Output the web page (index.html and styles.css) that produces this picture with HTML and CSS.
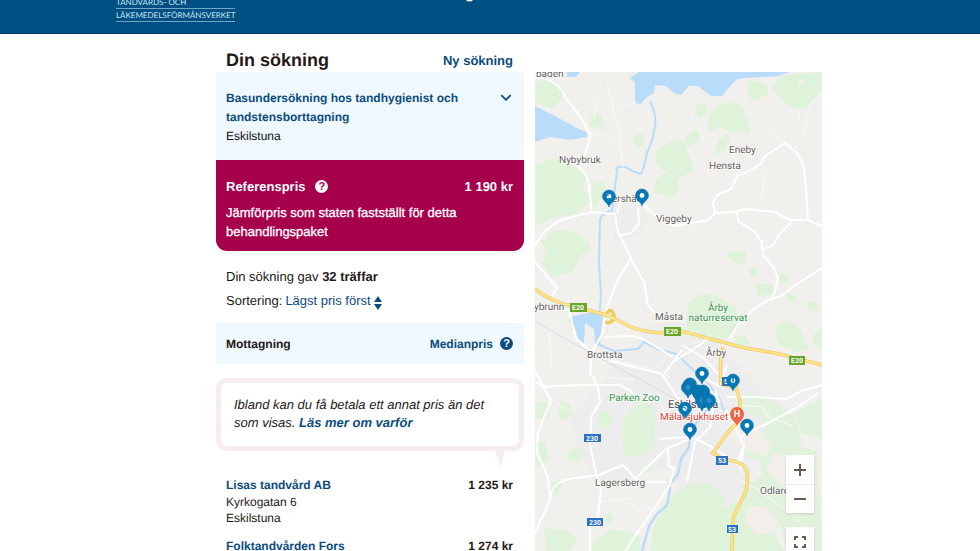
FILE: index.html
```
<!DOCTYPE html>
<html lang="sv">
<head>
<meta charset="utf-8">
<meta name="viewport" content="width=device-width, initial-scale=1">
<title>Din sökning</title>
<link rel="stylesheet" href="styles.css">
</head>
<body>
<header class="top">
  <div class="wrap top-inner">
    <div class="logo"><span>TANDVÅRDS- OCH</span><span>LÄKEMEDELSFÖRMÅNSVERKET</span></div>
    <svg class="top-mark" viewBox="0 0 8 2" aria-hidden="true"><path d="M0 0h7q-1 1.500-3.500 1.500T0 0z" fill="#fff"/></svg>
  </div>
</header>
<main class="wrap content">
  <section class="results">
    <div class="title-row"><h1>Din sökning</h1><a href="#">Ny sökning</a></div>
    <div class="panel query">
      <div><a href="#">Basundersökning hos tandhygienist och tandstensborttagning</a><p>Eskilstuna</p></div>
      <button class="plain" type="button" aria-label="Visa mer"><svg class="chevron" viewBox="0 0 10 6"><path d="M1 1l4 4 4-4" fill="none" stroke="currentColor" stroke-width="1.500"/></svg></button>
    </div>
    <div class="reference">
      <div class="row"><span class="label"><strong>Referenspris</strong>
        <button class="plain help" type="button" aria-label="Om referenspris">?</button></span><strong>1 190 kr</strong></div>
      <p>Jämförpris som staten fastställt för detta behandlingspaket</p>
    </div>
    <div class="summary">
      <p>Din sökning gav <strong>32 träffar</strong></p>
      <div class="sort"><label for="sort">Sortering:</label>
        <select id="sort"><option>Lägst pris först</option></select>
        <svg class="sorter" viewBox="0 0 8 14" aria-hidden="true"><path d="M4 0l4 6H0zM4 14l4-6H0z" fill="currentColor"/></svg>
      </div>
    </div>
    <div class="panel row columns"><strong>Mottagning</strong>
      <span class="label"><a href="#">Medianpris</a><button class="plain help" type="button" aria-label="Om medianpris">?</button></span></div>
    <div class="bubble">
      <p>Ibland kan du få betala ett annat pris än det som visas. <a href="#">Läs mer om varför</a></p>
      <svg class="tail" viewBox="0 0 12 18" aria-hidden="true"><path d="M0 0h12Q9 6 7 18Q4 6 0 0z" fill="#f5edf1"/></svg>
    </div>
    <ul class="clinics">
      <li><div><a href="#">Lisas tandvård AB</a><p>Kyrkogatan 6<br>Eskilstuna</p></div><strong>1 235 kr</strong></li>
      <li><div><a href="#">Folktandvården Fors</a></div><strong>1 274 kr</strong></li>
    </ul>
  </section>
  <section class="map" aria-label="Karta">
    <svg class="map-art" viewBox="535 72 287 479" preserveAspectRatio="xMidYMin slice">
      <defs>
        <g id="pin"><path d="M0 0C-1-4-6.500-6-6.500-10.500A6.500 6.500 0 0 1 6.500-10.500C6.500-6 1-4 0 0z" fill="#0679b5" stroke="#0568a0" stroke-width=".5"/><circle cy="-10.500" r="2.400" fill="#fff"/></g>
        <g id="pin-dim"><path d="M0 0C-1-4-6.500-6-6.500-10.500A6.500 6.500 0 0 1 6.500-10.500C6.500-6 1-4 0 0z" fill="#0679b5" stroke="#0568a0" stroke-width=".7"/><circle cy="-10.500" r="2.400" fill="#2d8fc2"/></g>
      </defs>
      <rect x="535" y="72" width="287" height="479" fill="#f2f0ec"/>
      <path fill="#ececee" d="M612 205l22-6 14 18-6 18-28 6zM648 325l52-4 22 30 30 25 30 50-38 60-32 60-30-40-10-40-70 20-22-30-10-40 20-20z" opacity=".75"/>
      <g class="green">
        <path d="M535 83q13-7 25 3 5 8 1 14l-10 8-16-6zM590 117l9-4q5 5 4 13l-6 2-8-3zM634 137q5-6 10-2l-1 11-5 2-5-6zM632 73h7v10l-5 2-4-7zM535 165l18-7 24 10 11 7-6 13 10 11-16 15-25 4-16 8zM594 181l10 1 3 10-9 9-5 16-3-18zM548 233q16-7 34 3 10 8 9 15l-9 3-10 18-21 5-8-12zM655 154q8-14 28-14l8 22-6 15-15-3-14-10zM655 180l10-7 12 5 1 12-6 9-17-7zM540 240l45 2 3 8-8 5-15 3-13-3-6-7z"/>
        <path d="M674 141q9 2 10 12l8 9 1 10-12 2-8 23zM696 106q6-5 11 0v8l-7 4-5-6zM685 139l3-5q10-8 12-1-1 11-14 14zM709 117q5-15 22-15 11 0 13 10l5 11 1 8-2 3-19-3-10-4-9 5-2-11zM715 148q3-10 13-14l2 5-8 15-8 1zM749 82q9-4 19 5l-1 9-16 4-3-7zM772 88q4-10 12-13l38-3v18l-15 18q-12 3-24-7z"/>
        <path d="M726 255q8-6 20-3v9l-6 4-9-4zM748 268h9v8l-6 1zM755 284h17l1 10-15 2zM779 273l9 2 1 9-9-2zM785 293l8 2 4 7-9-1zM808 300l8 3 3 7-7 1-5-5zM688 304q7-12 24-10l17 9q11 7 9 15-1 10-7 17l-14 10-15-8-16-8zM736 337l9-1 5 7-13 5-2-5zM777 324l10-4 14 9 8 20-13 3-16-6-5-12zM813 336l9-11v25l-9-6z"/>
        <path d="M621 429l4-12 15-16 13 4 2 40-12 12-20-1zM598 412l11-1 6 9-7 7-9-2zM560 401l10 2 3 13-11 4-3-5zM537 402h11l2 14-9 4-6-3zM535 442h10l3 19-10 5-3-3zM567 454l8-7 9 3-4 10-10 2zM645 465l7 4-4 4-5-3zM550 485l8-5 5 3-6 11-6 2zM602 515l9-3 3 8-6 5zM544 528l21 2 12 9-6 12h-25zM590 551l6-12 16-10 27 6 2 16zM650 551l4-25 18-30 16-11 21-2 16 13-5 12 15-5 25 4 22 11-8 15 10 18z"/>
        <path d="M739 394l27 1 19 14 11 10 6 28 15 4 5 100h-35l-8-30-30-8-8-15 2-12 20-10-4-15-18-8-4-20 20 3 12-12-16-10-14-8zM795 413l17-10 10-4v40l-20-6z" opacity=".9"/>
      </g>
      <g fill="#f2eee9"><path d="M738 425l26 7 8 14-7 11-26-10-10-10zM747 506l20 1 11 15-6 12-16 1-11-13zM774 452l21 8 7 30-18-3-17-16z"/><circle cx="801" cy="82" r="3"/></g>
      <g class="water">
        <path d="M639 72h150l-10 4-32 2-10 1-10 11-3 4-2 2h-11l-13-10-9 0-8 9-7-2-8-7-11-1-1 8-7 4-7 8-5-3v-20l-5-4zM567 72l13 0-4 5-9 0zM535 106l18 9 26 14 8 3v5l-17 3-20-3-15 5zM572 316l17-3 10-1 4 4-3 29-5 0-1-16-9-6-1 20-5 0-3-12-7-11z"/>
      </g>
      <g class="river">
        <path d="M650 101q7 14 5 26-3 16-8 26l-3 13q-2 6-3 8-8-2-16-7-11-1-8 4l-3 24-2 16q-10 1-12 9l-1 44 2 30-2 28-2 22 17 7 24-2 6-7 16 8 17 4 12 12 18 16 12 15 5 14"/>
        <path d="M710 400q-2 12-13 22-9 11-8 25l-8 12-3 15-8 10q0 12-4 22l-9 8-8 12-7 25" stroke-width="2.500"/>
      </g>
      <g class="minor">
        <path d="M593 120l4-13-5-15M607 82l6 25 7 30 3 34M617 110l19-9M590 134l12 1 16 6M596 365l18-5 33 8 23 9M545 390l6 9 16 11M740 103l13 14 30 26M691 116l9 15 5 14M798 106l2 14 7 5M765 174l-3 25-7 8M600 377l14 1 21 2M600 502l30-4 9 13 11-4M735 404l27 3 6 10 25 9M731 476l24 12 36 26 20 18M744 461l15 8M822 92L810 105 805 130 796 145 797 153M728 145l10 20"/>
        <path d="M654 371l11-15M558 326l-9 8 3 34M658 393l6 20M698 377l27 12M693 331l7 15 17 10"/>
      </g>
      <path d="M535 321q40 24 76 43t77 42" fill="none" stroke="#dddcdd"/>
      <g class="roads">
        <path d="M535 77q22 1 31 21 18 22 24 37 0 13-12 31 10 8 11 20l3 26-20 5q-25 5-37 29M592 212l23 2 2 15 8 17M625 245l6 13-14 23-9 24-6 29-9 17M617 213l4-12 11-2 12 6 15 14 16 7M638 207l1 17-8 9-13 3"/>
        <path d="M675 226L708 220 715 213 735 212 745 209 775 212 790 220 808 220 822 226M715 213L713 203 717 195 731 189 737 176 745 173 761 164 765 156 785 143 797 153 804 167 806 190 808 220M737 212L738 221 755 232 763 245M792 222L780 233 773 245 762 250 763 255 774 268 778 278 775 292 771 298 755 308 738 325 730 338M762 250L762 240M822 268L800 282 781 296 771 299"/>
        <path d="M631 260l13 22 4 23 7 8M535 262l7 8 15 18-5 8M535 308l34 2 7 28 15 14M604 337l28-1 11 3 30 18M592 352l-2 20 8 15 2 15-9 15-1 28 6 28 5 18-3 26-8 10v24M535 371l8 15 8 15-13 31-1 21 11 24 2 22-6 14-9 20M551 500q-2-19 24-22l24-3 24-10 13 14 4 3h26M637 477l29-28 26-11M716 392l-6 35-15 15-8 40M668 446l1 20 5 2-4 17-30 44-15 22M535 382q12 7 18 4l29-1 38 0 17 10M610 361l52 13 18 28M664 374l18-24M682 345l22 13 15 17M673 362l28-18 9-8M700 376l19 10M720 403l-5-13M720 386l7-21M727 397l30 0 30 2 14-8 21-6M695 438l22 12 20 14M726 410l18 35-4 25M744 445l-6 17M738 438l30-15 30-16 20-14M688 437l-28 2"/>
      </g>
      <g fill="none" stroke="#edcd62" stroke-width="3.500">
        <path d="M535 289q15 12 37 17l35 9 22 11q21 10 52 5l34 9 25 7 40 7 42 11"/>
        <path d="M605 317q5-12 9-2-1 10-9 7M723 347q-4 15-2 37l15 3 4 14-1 20-10 10-16 22 9 6q12 1 21 6 7 6 3 26l-13 27-1 33"/>
      </g>
      <g fill="none" stroke="#ffe38f" stroke-width="2"><path d="M535 289q15 12 37 17l35 9 22 11q21 10 52 5l34 9 25 7 40 7 42 11M723 347q-4 15-2 37l15 3 4 14-1 20-10 10-16 22 9 6q12 1 21 6 7 6 3 26l-13 27-1 33"/></g>
      <g class="badges">
        <path fill="#67a728" d="M570 303h17v9h-17zM664 327h17v9h-17zM789 356h16v9h-16z"/>
        <path fill="#2c70c0" d="M584 434h17v8h-17zM587 518h16v8h-16zM716 456h12v9h-12zM727 525h11v8h-11zM722 377h12v9h-12z"/>
        <text x="578" y="310">E20</text><text x="672" y="334">E20</text><text x="797" y="363">E20</text>
        <text x="592" y="441">230</text><text x="595" y="525">230</text><text x="722" y="463">53</text><text x="732" y="532">53</text><text x="726" y="384">5</text>
      </g>
      <g class="places">
        <text x="536" y="77">baden</text><text x="559" y="163">Nybybruk</text><text x="729" y="153">Eneby</text><text x="709" y="169">Hensta</text><text x="656" y="222">Viggeby</text><text x="612" y="202">ershäl</text><text x="534" y="310">ybrunn</text><text x="655" y="320">Måsta</text><text x="587" y="358">Brottsta</text><text x="706" y="356">Årby</text><text x="595" y="486">Lagersberg</text><text x="760" y="494">Odlare</text>
        <text class="park" x="718" y="311" text-anchor="middle">Årby</text><text class="park" x="718" y="321" text-anchor="middle">naturreservat</text><text class="park" x="609" y="401">Parken Zoo</text>
        <text class="city" x="668" y="408">Eskilstuna</text><text class="hospital" x="660" y="420">Mälarsjukhuset</text>
      </g>
      <path d="M737 426c-1-4-7-6-7-12a7 7 0 0 1 14 0c0 6-6 8-7 12z" fill="#ed6543"/><path d="M735 410v7M739 410v7M735 413.500h4" fill="none" stroke="#fff" stroke-width="1.500"/>
      <g>
        <use href="#pin" x="609" y="207"/><path d="M606 196l3-1M608 198l3 1" stroke="#0679b5"/><use href="#pin" x="642" y="206"/>
        <use href="#pin" x="702" y="384"/><use href="#pin" x="733" y="391"/><path d="M733 378v4" stroke="#0679b5" stroke-width="1.500"/>
        <use href="#pin-dim" x="690" y="395"/><use href="#pin-dim" x="688" y="398"/><use href="#pin-dim" x="698" y="402"/><use href="#pin-dim" x="703" y="402"/><use href="#pin-dim" x="700" y="405"/><use href="#pin-dim" x="704" y="407"/><use href="#pin-dim" x="702" y="411"/><use href="#pin-dim" x="709" y="411"/>
        <use href="#pin" x="685" y="419"/><path d="M683 407l3 1v2" fill="none" stroke="#0679b5"/><use href="#pin" x="690" y="440"/><use href="#pin" x="747" y="436"/>
      </g>
    </svg>
    <div class="controls">
      <div class="zoom"><button type="button" aria-label="Zooma in"><svg viewBox="0 0 14 14"><path d="M7 1v12M1 7h12"/></svg></button><button type="button" aria-label="Zooma ut"><svg viewBox="0 0 14 14"><path d="M1 7h12"/></svg></button></div>
      <button type="button" aria-label="Helskärm"><svg viewBox="0 0 14 14"><path d="M2 5V2h3M9 2h3v3M12 9v3H9M5 12H2V9"/></svg></button>
    </div>
  </section>
</main>
</body>
</html>
```
FILE: styles.css
```
* { box-sizing: border-box; }
body { margin: 0; height: 100vh; overflow: hidden; background: #fff; color: #231815; font: 12px/18px "Liberation Sans", Arial, sans-serif; text-rendering: geometricPrecision; }
h1, p, ul { margin: 0; padding: 0; }
a { color: #0b4c7d; font-weight: bold; text-decoration: none; }
.wrap { width: 100%; max-width: 748px; margin: 0 auto; }
.top { height: 34px; background: #004f82; border-bottom: 1px solid #063c69; overflow: hidden; }
.top-inner { height: 100%; position: relative; display: flex; align-items: flex-end; padding-bottom: 11px; }
.logo { display: flex; flex-direction: column; color: #c9e4f2; font: 8px/12px Lato, sans-serif; }
.logo span { border-bottom: 1px solid #6fa5c5; }
.top-mark { position: absolute; top: 0; left: 350px; width: 8px; height: 2px; }
.content { display: grid; grid-template-columns: minmax(0, 308fr) minmax(0, 287fr); column-gap: 11px; padding: 0 42px 0 100px; }
.title-row { height: 38px; padding: 0 11px 0 10px; display: flex; justify-content: space-between; align-items: flex-end; }
h1 { font-size: 18px; line-height: 24px; }
.title-row a { font-size: 13px; line-height: 22px; }
.panel { background: #eff8fd; }
.query { height: 88px; padding: 17px 12px 0 10px; display: flex; justify-content: space-between; align-items: flex-start; line-height: 19px; color: #111; }
.plain { border: 0; padding: 0; background: none; color: #0b4c7d; font: inherit; }
.chevron { display: block; width: 12px; height: 7px; margin: 5px 0; }
.row { display: flex; justify-content: space-between; align-items: center; }
.label { display: flex; align-items: center; gap: 10px; }
.reference { background: #a6004c; color: #fff; border-radius: 0 0 11px 11px; padding: 17px 11px 10px 10px; font-size: 13px; line-height: 19px; }
.reference p { margin-top: 7px; -webkit-text-stroke: 0.3px #fff; }
.help { width: 13px; height: 13px; border-radius: 50%; background: #fff; color: #a6004c; font: bold 11px/13px "Liberation Sans", sans-serif; text-align: center; }
.summary { padding: 14px 10px 10px; font-size: 13px; line-height: 24px; }
.sort { display: flex; align-items: center; gap: 3px; }
.sort select { appearance: none; border: 0; padding: 0; background: none; color: #0b4c7d; font: inherit; }
.sorter { width: 8px; height: 14px; color: #0b4c7d; margin-top: 4px; }
.columns { height: 41px; padding: 0 11px 0 10px; }
.columns .label { gap: 7px; }
.columns .help { background: #0b4c7d; color: #fff; }
.bubble { position: relative; margin-top: 14px; border: 5px solid #f5edf1; border-radius: 11px; padding: 13px 13px 14px; font-size: 13px; font-style: italic; }
.tail { position: absolute; right: 13px; top: 100%; margin-top: 4px; width: 12px; height: 18px; }
.clinics { list-style: none; margin-top: 25px; padding: 0 11px 0 10px; }
.clinics li { display: flex; justify-content: space-between; margin-bottom: 11px; }
.clinics p { line-height: 16px; }
.map { position: relative; margin-top: 38px; height: calc(100vh - 72px); overflow: hidden; background: #f2f0ec; }
.map-art { display: block; width: 100%; height: 100%; }
.green { fill: #dff2da; }
.water { fill: #b9dcfa; }
.river { fill: none; stroke: #b9dcfa; stroke-width: 2; stroke-linejoin: round; }
.minor { fill: none; stroke: #faf9f7; stroke-width: 1; }
.roads { fill: none; stroke: #fff; stroke-width: 2; stroke-linejoin: round; }
.badges text { fill: #fff; font: bold 7px Roboto, sans-serif; text-anchor: middle; }
.places { fill: #66625f; font: 10px Roboto, sans-serif; stroke: #fff; stroke-width: 2px; stroke-opacity: 0.7; paint-order: stroke; stroke-linejoin: round; }
.park { fill: #329447; }
.city { fill: #49424b; font-size: 11px; }
.hospital { fill: #dd4938; }
.controls { position: absolute; right: 8px; top: 383px; display: grid; gap: 14px; }
.controls button { display: grid; place-items: center; width: 28px; height: 29px; padding: 0; border: 0; background: #fff; box-shadow: 0 1px 2px #0002; }
.controls svg { width: 14px; height: 14px; fill: none; stroke: #665b51; stroke-width: 2; }
.zoom button + button { border-top: 1px solid #eee; }
```
